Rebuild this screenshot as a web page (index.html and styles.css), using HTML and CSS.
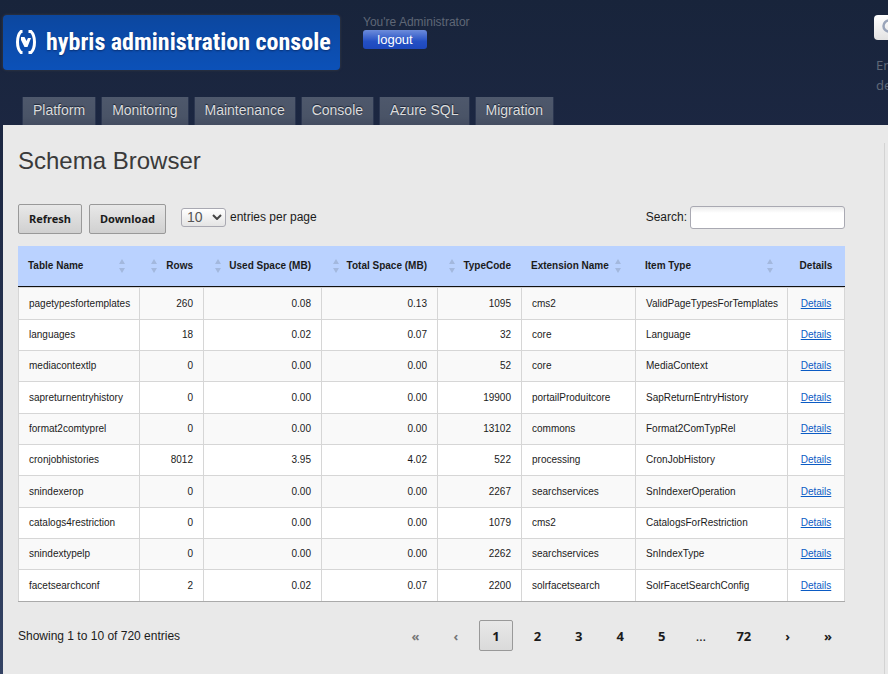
FILE: index.html
```html
<!DOCTYPE html>
<html lang="en">
<head>
<meta charset="utf-8">
<title>hybris administration console</title>
<link rel="stylesheet" href="styles.css">
</head>
<body>
<header class="header">
  <a class="logo" href="#">
    <svg class="logo-mark" viewBox="0 0 22 24" aria-hidden="true">
      <path d="M7.500 1.500H6Q2.500 5 2.500 12T6 22.500h1.500M13.500 1.500H16Q19.500 5 19.500 12T16 22.500h-2.500" fill="none" stroke="#fff" stroke-width="3"/>
      <path d="M6 7h3.500l2 4 1.500-3h3l-3.500 9h-3L6 10z" fill="#fff"/>
    </svg>
    <span class="logo-text">hybris administration console</span>
  </a>
  <div class="user">
    <span>You're Administrator</span>
    <button class="logout" type="button">logout</button>
  </div>
  <div class="find">
    <label class="find-box">
      <svg class="find-icon" viewBox="0 0 18 18" aria-hidden="true"><circle cx="7" cy="7" r="5.500" fill="none" stroke="#9aa5ba" stroke-width="2.500"/><path d="M11 11l5 5" stroke="#9aa5ba" stroke-width="3"/></svg>
      <input type="text" aria-label="Find">
    </label>
    <p class="find-hint">En<br>de</p>
  </div>
</header>
<nav class="tabs">
  <a href="#">Platform</a>
  <a href="#">Monitoring</a>
  <a href="#">Maintenance</a>
  <a href="#">Console</a>
  <a href="#">Azure SQL</a>
  <a href="#">Migration</a>
</nav>
<div class="panel">
  <main class="content">
    <h1>Schema Browser</h1>
    <div class="toolbar">
      <button class="btn" type="button">Refresh</button>
      <button class="btn" type="button">Download</button>
      <div class="length">
        <span class="select"><select id="length"><option>10</option><option>25</option><option>50</option></select><svg viewBox="0 0 10 6" aria-hidden="true"><path d="M1 1l4 4 4-4" fill="none" stroke="#444" stroke-width="2"/></svg></span>
        <label for="length">entries per page</label>
      </div>
      <div class="search">
        <label for="search">Search:</label>
        <input id="search" type="search">
      </div>
    </div>
    <table>
      <colgroup><col class="c-name"><col class="c-rows"><col class="c-used"><col class="c-total"><col class="c-code"><col class="c-ext"><col class="c-type"><col></colgroup>
      <thead>
        <tr>
          <th><div class="th">Table Name<i class="sort"></i></div></th>
          <th class="num"><div class="th">Rows<i class="sort"></i></div></th>
          <th class="num"><div class="th">Used Space (MB)<i class="sort"></i></div></th>
          <th class="num"><div class="th">Total Space (MB)<i class="sort"></i></div></th>
          <th class="num"><div class="th">TypeCode<i class="sort"></i></div></th>
          <th><div class="th">Extension Name<i class="sort"></i></div></th>
          <th><div class="th">Item Type<i class="sort"></i></div></th>
          <th class="act">Details</th>
        </tr>
      </thead>
      <tbody>
        <tr><td>pagetypesfortemplates</td><td class="num">260</td><td class="num">0.08</td><td class="num">0.13</td><td class="num">1095</td><td>cms2</td><td>ValidPageTypesForTemplates</td><td class="act"><a href="#">Details</a></td></tr>
        <tr><td>languages</td><td class="num">18</td><td class="num">0.02</td><td class="num">0.07</td><td class="num">32</td><td>core</td><td>Language</td><td class="act"><a href="#">Details</a></td></tr>
        <tr><td>mediacontextlp</td><td class="num">0</td><td class="num">0.00</td><td class="num">0.00</td><td class="num">52</td><td>core</td><td>MediaContext</td><td class="act"><a href="#">Details</a></td></tr>
        <tr><td>sapreturnentryhistory</td><td class="num">0</td><td class="num">0.00</td><td class="num">0.00</td><td class="num">19900</td><td>portailProduitcore</td><td>SapReturnEntryHistory</td><td class="act"><a href="#">Details</a></td></tr>
        <tr><td>format2comtyprel</td><td class="num">0</td><td class="num">0.00</td><td class="num">0.00</td><td class="num">13102</td><td>commons</td><td>Format2ComTypRel</td><td class="act"><a href="#">Details</a></td></tr>
        <tr><td>cronjobhistories</td><td class="num">8012</td><td class="num">3.95</td><td class="num">4.02</td><td class="num">522</td><td>processing</td><td>CronJobHistory</td><td class="act"><a href="#">Details</a></td></tr>
        <tr><td>snindexerop</td><td class="num">0</td><td class="num">0.00</td><td class="num">0.00</td><td class="num">2267</td><td>searchservices</td><td>SnIndexerOperation</td><td class="act"><a href="#">Details</a></td></tr>
        <tr><td>catalogs4restriction</td><td class="num">0</td><td class="num">0.00</td><td class="num">0.00</td><td class="num">1079</td><td>cms2</td><td>CatalogsForRestriction</td><td class="act"><a href="#">Details</a></td></tr>
        <tr><td>snindextypelp</td><td class="num">0</td><td class="num">0.00</td><td class="num">0.00</td><td class="num">2262</td><td>searchservices</td><td>SnIndexType</td><td class="act"><a href="#">Details</a></td></tr>
        <tr><td>facetsearchconf</td><td class="num">2</td><td class="num">0.02</td><td class="num">0.07</td><td class="num">2200</td><td>solrfacetsearch</td><td>SolrFacetSearchConfig</td><td class="act"><a href="#">Details</a></td></tr>
      </tbody>
    </table>
    <div class="footer">
      <div>Showing 1 to 10 of 720 entries</div>
      <div class="pager">
        <button type="button" disabled>«</button>
        <button type="button" disabled>‹</button>
        <button type="button" class="current">1</button>
        <button type="button">2</button>
        <button type="button">3</button>
        <button type="button">4</button>
        <button type="button">5</button>
        <span class="dots">…</span>
        <button type="button">72</button>
        <button type="button">›</button>
        <button type="button">»</button>
      </div>
    </div>
  </main>
  <aside class="side"></aside>
</div>
</body>
</html>
```
FILE: styles.css
```css
* { box-sizing: border-box; }
body {
  margin: 0;
  min-height: 100vh;
  display: flex;
  flex-direction: column;
  overflow-x: hidden;
  background: linear-gradient(#18243b, #1c2742 140px, #344364);
  color: #1b1b1b;
  font: 12px/16px "Liberation Sans", Arial, sans-serif;
}
button, input, select { font: inherit; color: inherit; margin: 0; }

.header { display: flex; align-items: flex-start; padding: 15px 0 0 3px; height: 97px; }
.logo {
  display: flex;
  align-items: center;
  gap: 9px;
  width: 337px;
  height: 55px;
  padding: 0 12px 2px;
  border-radius: 4px;
  background: linear-gradient(#0c479f, #0c51b8);
  box-shadow: 0 0 2px 1px #2b3140;
  color: #fff;
  text-decoration: none;
  white-space: nowrap;
}
.logo-mark { width: 22px; height: 24px; flex: none; }
.logo-text {
  font: bold 24px/32px "Liberation Sans Narrow", "Roboto Condensed", "Open Sans Condensed", "DejaVu Sans Condensed", sans-serif;
  text-shadow: 0 1px 2px #0a2f70;
}
.user { display: flex; flex-direction: column; align-items: flex-start; gap: 1px; margin-left: 23px; line-height: 14px; color: #5f6776; }
.logout {
  width: 64px;
  height: 19px;
  padding: 0;
  border: 0;
  border-radius: 3px;
  background: linear-gradient(#6d8cdb, #2450c4 60%, #1d47bd);
  color: #fff;
  font-size: 13px;
  line-height: 18px;
}
.find { flex: 0 0 14px; margin-left: auto; overflow: hidden; white-space: nowrap; color: #5f6776; }
.find-box { display: flex; align-items: center; width: 220px; height: 25px; padding-left: 8px; border-radius: 4px; background: linear-gradient(#fff, #e2e2e2); }
.find-icon { width: 18px; height: 18px; flex: none; }
.find-box input { width: 180px; border: 0; background: none; }
.find-hint { margin: 15px 0 0 2px; font: 13px/20px "Noto Sans", sans-serif; }

.tabs { display: flex; gap: 5px; padding-left: 22px; }
.tabs a {
  height: 28px;
  padding: 0 10px;
  border: solid #2b3650;
  border-width: 0 1px;
  background: linear-gradient(#4e586c, #4a5467 70%, #434c60);
  color: #dcdcdc;
  font-size: 14px;
  line-height: 27px;
  text-decoration: none;
  text-shadow: 0 -1px 1px #1b2436;
}

.panel { flex: 1; display: flex; margin-left: 3px; background: #e9e9e9; }
.content { flex: 1; min-width: 0; padding: 20px 39px 20px 15px; }
.side { width: 4px; margin-top: 18px; border-left: 1px solid #d3d3d3; }
h1 { margin: 0; font-size: 24px; font-weight: normal; line-height: 32px; color: #3a3a3a; }

.toolbar { display: flex; align-items: center; gap: 7px; margin-top: 27px; }
.btn {
  height: 30px;
  padding: 0 10px;
  border: 1px solid #999;
  border-radius: 2px;
  background: linear-gradient(#e8e8e8, #d0d0d0);
  font: bold 11px/28px "Noto Sans", sans-serif;
}
.length { display: flex; align-items: center; gap: 4px; margin: 0 0 4px 8px; }
.select { display: flex; align-items: center; position: relative; }
.select select {
  appearance: none;
  width: 45px;
  height: 19px;
  padding: 0 5px;
  border: 1px solid #a9a9b2;
  border-radius: 3px;
  background: linear-gradient(#fff, #e4e4e4);
  color: #555;
  font-size: 14px;
  line-height: 16px;
}
.select svg { position: absolute; right: 4px; width: 10px; height: 6px; pointer-events: none; }
.search { display: flex; align-items: center; gap: 3px; margin: 0 0 4px auto; }
.search input {
  appearance: none;
  width: 155px;
  height: 23px;
  padding: 0 5px;
  border: 1px solid #a9a9b2;
  border-radius: 3px;
  background: linear-gradient(#ececec, #fff 6px);
}

table { width: 100%; margin-top: 12px; table-layout: fixed; border-collapse: separate; border-spacing: 0; border-bottom: 1px solid #aaa; font-size: 10px; line-height: 12px; }
.c-name { width: 121px; }
.c-rows { width: 64px; }
.c-used { width: 118px; }
.c-total { width: 116px; }
.c-code { width: 84px; }
.c-ext { width: 114px; }
.c-type { width: 152px; }
th { height: 41px; padding: 0 14px 0 10px; border-bottom: 1px solid #111; background: #bad2ff; text-align: left; white-space: nowrap; }
th.num { padding: 0 10px 0 12px; }
.th { display: flex; align-items: center; justify-content: space-between; }
.num .th { flex-direction: row-reverse; }
.sort { display: flex; flex-direction: column; gap: 4px; }
.sort::before, .sort::after { content: ""; border: solid transparent; border-width: 0 3px; }
.sort::before { border-bottom: 5px solid #a3b8de; }
.sort::after { border-top: 5px solid #a3b8de; }
td { height: 31px; padding: 0 10px; border-top: 1px solid #d6d6d6; border-left: 1px solid #d6d6d6; background: #fff; }
tr:nth-child(3n+1) td { height: 32px; }
tr:nth-child(odd) td { background: #f9f9f9; }
td:last-child { border-right: 1px solid #d6d6d6; }
td.num { text-align: right; }
th.act, td.act { padding: 0; text-align: center; }
td a { color: #0b5bc4; }

.footer { display: flex; align-items: center; justify-content: space-between; margin-top: 18px; }
.pager { display: flex; align-items: center; gap: 8px; font: bold 13px/28px "Noto Sans", sans-serif; }
.pager button { height: 31px; padding: 0 12px; border: 1px solid transparent; border-radius: 2px; background: none; }
.pager button:disabled { color: #777; }
.pager .current { border-color: #999; background: linear-gradient(#e8e8e8, #dadada); }
.dots { width: 29px; text-align: center; font-weight: normal; }
```
